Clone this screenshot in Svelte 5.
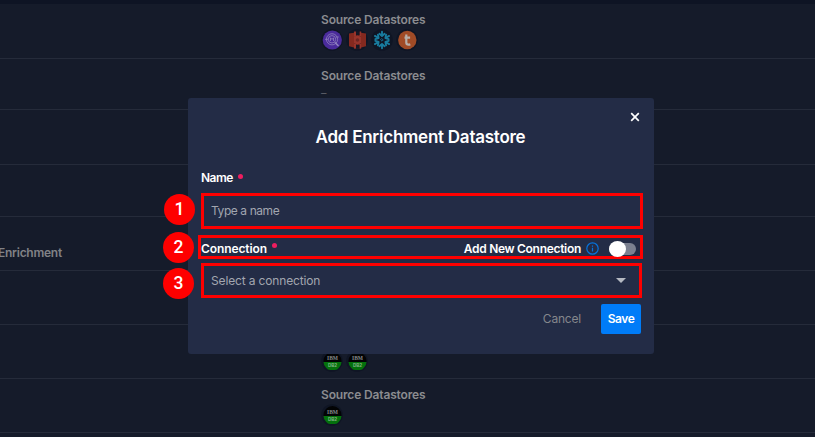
<script>
  const rows = [
    { h: 55, stores: ['query', 'redshift', 'snow', 'teradata'], head: true },
    { h: 51, empty: true, head: true },
    { h: 55 },
    { h: 52 },
    { h: 54, name: 'Enrichment' },
    { h: 54 },
    { h: 54, stores: ['ibm', 'ibm'], head: true },
    { h: 54, stores: ['ibm'], head: true }
  ];
  const spokes = [0, 60, 120, 180, 240, 300];
</script>

{#snippet store(kind)}
  <svg class="store" width="22" height="22" viewBox="0 0 22 22">
    <circle cx="11" cy="11" r="10.8" fill="#0f1524" />
    {#if kind === 'query'}
      <circle cx="11.3" cy="11" r="9.6" fill="#4a2b9b" />
      <g fill="none" stroke="#8f82bd" stroke-width="0.8">
        <circle cx="11" cy="10.3" r="5.6" />
        <circle cx="11" cy="10.3" r="3.7" />
        <path d="M9.5 12V8.8l1.5 1.6 1.5-1.6V12M4 10.3h3M15 8h2.8" />
        <path d="M14 13.4l3.5 3.6" stroke-width="1.5" />
      </g>
    {:else if kind === 'redshift'}
      <path d="M3 4.5l5-.8v14.8l-5-1.3zM20 4.5l-5-.8v14.8l5-1.3z" fill="#84291f" />
      <path d="M8 3h7v16.5H8z" fill="#5a2020" />
      <path d="M8 2.5h2v5.2H8zM8 14.8h2v4.7H8zM13.5 2.5h1.7v4.8h-1.7zM13.5 15h1.7v4.5h-1.7z" fill="#97342b" />
      <path d="M10 2.5h3.5v3.6H10zM10 16h3.5v3.5H10z" fill="#161724" />
      <path d="M8 7.8l3.5-1.3L15 7.8v6.4l-3.5 1.3L8 14.2z" fill="#97342b" />
      <circle cx="11.5" cy="11" r="1.8" fill="#6a2523" />
    {:else if kind === 'snow'}
      <g fill="none" stroke="#187b9e" stroke-width="1.9" stroke-linecap="round" stroke-linejoin="round">
        {#each spokes as a}
          <path transform={`rotate(${a} 11 11)`} d="M11 2.8v3.6M8.4 4.8l2.6 2.3 2.6-2.3" />
        {/each}
        <path d="M11 9.8l1.2 1.2-1.2 1.2L9.8 11z" stroke-width=".8" />
      </g>
    {:else if kind === 'teradata'}
      <circle cx="11.3" cy="11" r="9.2" fill="#a04b26" />
      <path d="M10.3 5.5v8q0 2.2 2.2 2.2.8 0 1.8-.3M8.5 8.7h5.6" fill="none" stroke="#b7afa9" stroke-width="2.2" />
    {:else}
      <path d="M2.5 11a9 9 0 0 1 18 0v1h-18z" fill="#020304" />
      <path d="M2.5 12h18q0 3-2.6 5.8Q16.3 20 14 20H9q-2.3 0-3.9-2.2Q2.5 15 2.5 12z" fill="#04710c" />
      <text x="11.5" y="10.3" class="ibm">IBM</text>
      <text x="11.5" y="17.2" class="db">DB2</text>
    {/if}
  </svg>
{/snippet}

<div class="page">
  <div class="topbar"></div>
  {#each rows as row}
    <div class="row" style:height={`${row.h}px`}>
      <div class="name">{row.name ?? ''}</div>
      <div class="cell" class:low={row.empty}>
        {#if row.head}<div class="heading">Source Datastores</div>{/if}
        {#if row.stores}
          <div class="stores">{#each row.stores as s}{@render store(s)}{/each}</div>
        {/if}
        {#if row.empty}<div class="dash">–</div>{/if}
      </div>
    </div>
  {/each}

  <div class="modal">
    <div class="top">
      <svg width="10" height="10" viewBox="0 0 10 10"><path d="M1.2 1.2l7.6 7.6M8.8 1.2L1.2 8.8" stroke="#fff" stroke-width="1.7" /></svg>
    </div>
    <div class="title"><span>Add Enrichment Datastore</span></div>
    <div class="label first"><span class="l-name">Name</span><i></i></div>
    <div class="field input"><span class="ph-name">Type a name</span></div>
    <div class="connection">
      <div class="label"><span class="l-conn">Connection</span><i></i></div>
      <div class="new">
        <span class="l-new">Add New Connection</span>
        <svg class="info" width="13" height="13" viewBox="0 0 13 13"><circle cx="6.5" cy="6.5" r="5.7" fill="none" stroke="#0673dc" stroke-width="1.2" /><path d="M6.5 5.8v3.8M6.5 3.4v1.3" stroke="#0673dc" stroke-width="1.2" /></svg>
        <div class="switch"><b></b></div>
      </div>
    </div>
    <div class="field select">
      <span class="ph-sel">Select a connection</span>
      <svg width="10" height="5" viewBox="0 0 10 5"><path d="M0 0h10L5 5z" fill="#b5b9c2" /></svg>
    </div>
    <div class="actions"><span class="cancel">Cancel</span><div class="save"><span>Save</span></div></div>
  </div>

  <div class="badge one">1</div>
  <div class="badge two">2</div>
  <div class="badge three">3</div>
</div>

<style>
  :global(body) { margin: 0; background: #151b2a; }
  .page { position: relative; box-sizing: border-box; width: 815px; height: 437px; overflow: hidden; background: #151b2a; font: 600 12px/16px Inter, "Liberation Sans", sans-serif; }
  .topbar { height: 4px; background: #0e1424; }
  .row { display: flex; box-sizing: border-box; border-bottom: 1px solid #252b3a; }
  .name { box-sizing: border-box; flex: none; width: 321px; padding-top: 28px; margin-left: -2px; color: #818286; letter-spacing: -0.25px; }
  .cell { padding: 8px 0 0 2px; }
  .low { padding-top: 9px; }
  .heading { color: #8b8c90; letter-spacing: -0.15px; white-space: nowrap; }
  .stores { display: flex; gap: 3px; padding-top: 1px; }
  .store { display: block; }
  .dash { color: #5a5d66; font-size: 11px; font-weight: 400; line-height: 19px; }
  .ibm, .db { font: 700 5.5px "Liberation Serif", serif; text-anchor: middle; fill: #85888a; }
  .db { font: 700 4.5px "Liberation Sans", sans-serif; fill: #83b486; }

  .modal { position: absolute; left: 188px; top: 98px; width: 466px; height: 256px; box-sizing: border-box; padding: 14px 12px 0 13px; border-radius: 3px; background: #232c46; color: #fff; }
  .top { display: flex; justify-content: flex-end; padding-right: 2px; height: 10px; }
  .title { display: flex; justify-content: center; padding: 3px 2px 0 0; font-size: 17px; line-height: 24px; letter-spacing: -0.25px; white-space: nowrap; }
  .label { display: flex; align-items: center; height: 16px; white-space: nowrap; }
  .first { margin-top: 21px; }
  .label i { width: 5px; height: 5px; margin: -4px 0 0 5px; border-radius: 50%; background: #ee1d5f; }
  .l-name { letter-spacing: -0.5px; }
  .l-conn { letter-spacing: -0.1px; }
  .l-new { letter-spacing: -0.3px; }
  .ph-name { letter-spacing: -0.42px; }
  .ph-sel { letter-spacing: -0.15px; }
  .field { box-sizing: border-box; display: flex; align-items: center; border: 3px solid #fe0000; color: #a2a6b0; font-weight: 400; }
  .input { width: 442px; height: 36px; margin-top: 7px; padding-left: 7px; }
  .select { width: 441px; height: 35px; margin-top: 4px; padding: 0 13px 0 7px; justify-content: space-between; }
  .connection { box-sizing: border-box; display: flex; justify-content: space-between; align-items: center; width: 445px; height: 24px; margin: 6px 0 0 -3px; padding-top: 4px; border: 3px solid #fe0000; }
  .connection .label i { margin-top: -7px; }
  .new { display: flex; align-items: center; }
  .info { margin: -1px 10px 0 5px; }
  .switch { display: flex; align-items: center; width: 27px; height: 12px; margin-right: 4px; border-radius: 6px; background: #7b8090; }
  .switch b { width: 17px; height: 16px; border-radius: 50%; background: #fff; }
  .actions { display: flex; justify-content: flex-end; align-items: center; margin-top: 6px; }
  .cancel { margin-right: 20px; color: #85878c; font-weight: 400; letter-spacing: -0.2px; }
  .save { display: flex; justify-content: center; align-items: center; width: 40px; height: 30px; margin-right: 1px; border-radius: 2px; background: #007cf8; letter-spacing: -0.45px; }
  .badge { position: absolute; display: flex; justify-content: center; align-items: center; width: 31px; height: 31px; border-radius: 50%; background: #fe0000; color: #fff; font: 500 17.5px/31px Roboto, sans-serif; }
  .one { left: 164px; top: 194px; }
  .two { left: 163px; top: 232px; }
  .three { left: 163px; top: 268px; }
</style>
